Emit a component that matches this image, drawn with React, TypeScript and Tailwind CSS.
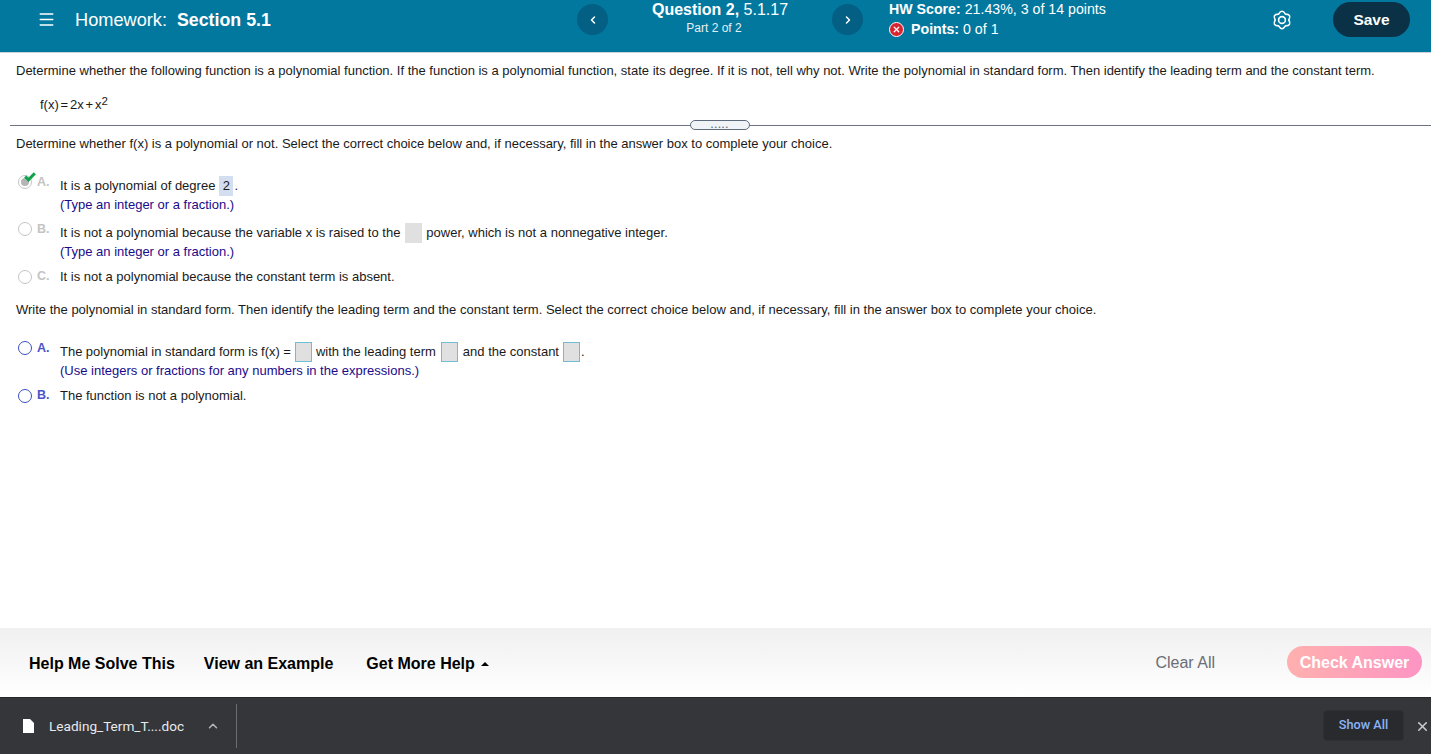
import React from "react";
import { ChevronLeft, ChevronRight, ChevronUp, Menu, X } from "lucide-react";

const AnswerBox = ({ active = false }: { active?: boolean }) => (
  <span
    className={`inline-block h-[20px] w-[17px] align-middle bg-[#e0e0e0] border ${
      active ? "border-[#6fbdd4]" : "border-[#e0e0e0]"
    }`}
  />
);

function Choice({
  letter,
  active = false,
  checked = false,
  className = "",
  children,
  hint,
}: {
  letter: string;
  active?: boolean;
  checked?: boolean;
  className?: string;
  children: React.ReactNode;
  hint?: string;
}) {
  // rows with a hint line have the radio sitting a little above the text
  return (
    <div className={`flex ${className}`}>
      <div className={`relative w-[37px] pl-[18px] h-[20px] shrink-0 ${hint ? "pt-0" : "pt-[4px]"}`}>
        <span
          className={`block h-[14px] w-[14px] rounded-full border-[1.5px] bg-white ${
            active ? "border-[#3b4fc4]" : "border-[#c4c4c4]"
          }`}
        />
        {checked && (
          <>
            <span className="absolute left-[21px] top-[3px] h-[8px] w-[8px] rounded-full bg-[#b5b5b5]" />
            <svg className="absolute left-[24px] top-[-3px]" width="12" height="10" viewBox="0 0 12 10">
              <path d="M1.2 4.5 L4.5 7.8 L10.8 1.2" fill="none" stroke="#0fa34a" strokeWidth="3" />
            </svg>
          </>
        )}
      </div>
      <div className="w-[23px] shrink-0">
        <span
          className={`block h-[17px] leading-[17px] font-bold text-[12.5px] ${hint ? "-mt-[1px]" : "mt-[2px]"} ${
            active ? "text-[#4a55c8]" : "text-[#c4c4c4]"
          }`}
        >
          {letter}.
        </span>
      </div>
      <div>
        <div className="h-[20px] leading-[20px] mt-[1px] whitespace-nowrap flex items-center">{children}</div>
        {hint && <div className="h-[20px] leading-[20px] mt-[-1px] text-[#1a0a8c]">{hint}</div>}
      </div>
    </div>
  );
}

export default function App() {
  return (
    <div className="h-[754px] w-[1431px] overflow-hidden flex flex-col bg-white text-[13px] text-[#1a1a1a] font-['Liberation_Sans',Arial,sans-serif]">
      <header className="h-[53px] shrink-0 bg-[#02789f] border-b border-[#c9d3db] flex text-white">
        <div className="w-[577px] shrink-0 flex items-start pt-[8px] pl-[37px]">
          <Menu className="h-[19px] w-[19px] mt-[2px]" strokeWidth={1.7} />
          <span className="ml-[19px] text-[18.2px] leading-[24px]">
            Homework:<span className="font-bold ml-[10px] text-[17.8px]">Section 5.1</span>
          </span>
        </div>
        <button className="mt-[4px] h-[31px] w-[31px] rounded-full bg-[#045f84] flex items-center justify-center">
          <ChevronLeft className="h-[12px] w-[12px]" strokeWidth={3} />
        </button>
        <div className="w-[224px] shrink-0 text-center">
          <div className="text-[16px] leading-[19px]">
            <span className="font-bold">Question 2,</span> 5.1.17
          </div>
          <div className="text-[12px] leading-[16px] mt-[1px] pr-[12px] text-[#e3f0f5]">Part 2 of 2</div>
        </div>
        <button className="mt-[4px] h-[31px] w-[31px] rounded-full bg-[#045f84] flex items-center justify-center">
          <ChevronRight className="h-[12px] w-[12px]" strokeWidth={3} />
        </button>
        <div className="ml-[26px] w-[383px] shrink-0 text-[14.2px] leading-[20px] -mt-[1px]">
          <div>
            <span className="font-bold">HW Score:</span> 21.43%, 3 of 14 points
          </div>
          <div className="flex items-center">
            <span className="h-[15px] w-[15px] rounded-full bg-[#d9232e] border border-white flex items-center justify-center">
              <X className="h-[9px] w-[9px]" strokeWidth={3.5} />
            </span>
            <span className="ml-[7px]">
              <span className="font-bold">Points:</span> 0 of 1
            </span>
          </div>
        </div>
        <svg className="mt-[10px]" width="20" height="20" viewBox="0 0 20 20" fill="none" stroke="#ffffff" strokeWidth="1.6" strokeLinejoin="round">
          <path d="M6.6 4.11 Q10 -1.5 13.4 4.11 Q19.96 4.25 16.8 10 Q19.96 15.75 13.4 15.89 Q10 21.5 6.6 15.89 Q0.04 15.75 3.2 10 Q0.04 4.25 6.6 4.11 Z" />
          <circle cx="10" cy="10" r="3.4" />
        </svg>
        <button className="ml-[41px] mt-[2px] h-[35px] w-[77px] rounded-full bg-[#0b3146] font-bold text-[15.5px] pt-[1px]">Save</button>
      </header>

      <main className="flex-1 overflow-hidden">
        <p className="ml-[16px] mt-[8px] h-[20px] leading-[20px] whitespace-nowrap">
          Determine whether the following function is a polynomial function. If the function is a polynomial function, state its degree. If it is not, tell why not. Write the polynomial in standard form. Then identify the leading term and the constant term.
        </p>
        <p className="ml-[40px] mt-[14px] h-[20px] leading-[20px] [word-spacing:-1.8px]">
          f(x) = 2x + x<sup className="text-[11.5px] relative top-[1px] align-super leading-none">2</sup>
        </p>
        <div className="relative ml-[10px] mt-[10px] h-px bg-[#6b7480]">
          <div className="absolute left-[680px] top-[-5px] h-[10px] w-[60px] rounded-full border border-[#5f6b7a] bg-[#f1f4f7] flex items-center justify-center">
            <span className="text-[#5f6b7a] text-[9px] leading-[8px] font-bold tracking-[1.2px] -mt-[1px]">.....</span>
          </div>
        </div>
        <p className="ml-[16px] mt-[8px] h-[20px] leading-[20px]">
          Determine whether f(x) is a polynomial or not. Select the correct choice below and, if necessary, fill in the answer box to complete your choice.
        </p>

        <Choice className="mt-[21px]" letter="A" checked hint="(Type an integer or a fraction.)">
          It is a polynomial of degree
          <span className="ml-[4px] mr-[1px] h-[20px] w-[14px] bg-[#d3dff0] text-center">2</span>.
        </Choice>
        <Choice className="mt-[7px]" letter="B" hint="(Type an integer or a fraction.)">
          It is not a polynomial because the variable x is raised to the
          <span className="ml-[5px] mr-[4px] flex"><AnswerBox /></span>
          power, which is not a nonnegative integer.
        </Choice>
        <Choice className="mt-[4px]" letter="C">
          It is not a polynomial because the constant term is absent.
        </Choice>

        <p className="ml-[16px] mt-[13px] h-[20px] leading-[20px]">
          Write the polynomial in standard form. Then identify the leading term and the constant term. Select the correct choice below and, if necessary, fill in the answer box to complete your choice.
        </p>

        <Choice className="mt-[21px]" letter="A" active hint="(Use integers or fractions for any numbers in the expressions.)">
          <span className="[word-spacing:-0.2px]">The polynomial in standard form is f(x) =</span>
          <span className="mx-[4px] flex"><AnswerBox active /></span>
          with the leading term
          <span className="mx-[5px] flex"><AnswerBox active /></span>
          and the constant
          <span className="ml-[4px] mr-[1px] flex"><AnswerBox active /></span>.
        </Choice>
        <Choice className="mt-[4px]" letter="B" active>
          The function is not a polynomial.
        </Choice>
      </main>

      <footer className="h-[69px] shrink-0 bg-gradient-to-b from-[#f0f0f0] to-white flex items-center pl-[29px] pr-[9px] pt-[2px] text-black">
        <button className="font-bold text-[16px]">Help Me Solve This</button>
        <button className="font-bold text-[16px] ml-[29px]">View an Example</button>
        <button className="font-bold text-[16px] ml-[33px] flex items-center">
          Get More Help
          <span className="ml-[6px] h-0 w-0 border-x-[4px] border-b-[4px] border-x-transparent border-b-black" />
        </button>
        <button className="ml-auto text-[16px] text-[#6b6e75] -mt-[1px]">Clear All</button>
        <button className="ml-[72px] -mt-[4px] pt-[3px] h-[32px] w-[135px] rounded-full bg-gradient-to-r from-[#ffb0ae] to-[#fd94c3] text-white font-bold text-[16px]">
          Check Answer
        </button>
      </footer>

      <div className="h-[57px] shrink-0 bg-[#35363a] border-t border-[#26272a] flex items-center text-white font-['Roboto',sans-serif]">
        <svg className="ml-[23px]" width="11" height="14" viewBox="0 0 11 14">
          <path d="M0 0 H7 L11 4 V14 H0 Z" fill="#ffffff" />
        </svg>
        <span className="ml-[15px] text-[13.6px] text-[#e8eaed]">Leading_Term_T....doc</span>
        <ChevronUp className="ml-[22px] h-[14px] w-[14px] text-[#b5b7ba]" strokeWidth={2.5} />
        <div className="ml-[16px] h-[44px] w-px bg-[#6a6c70]" />
        <button className="ml-auto -mt-[2px] h-[31px] w-[81px] rounded-[4px] bg-[#292a2e] border border-[#2f3034] text-[#8ab4f8] text-[12.7px] font-medium">
          Show All
        </button>
        <X className="ml-[11px] mr-[1px] h-[15px] w-[15px] text-[#c8cacc]" strokeWidth={2.5} />
      </div>
    </div>
  );
}
